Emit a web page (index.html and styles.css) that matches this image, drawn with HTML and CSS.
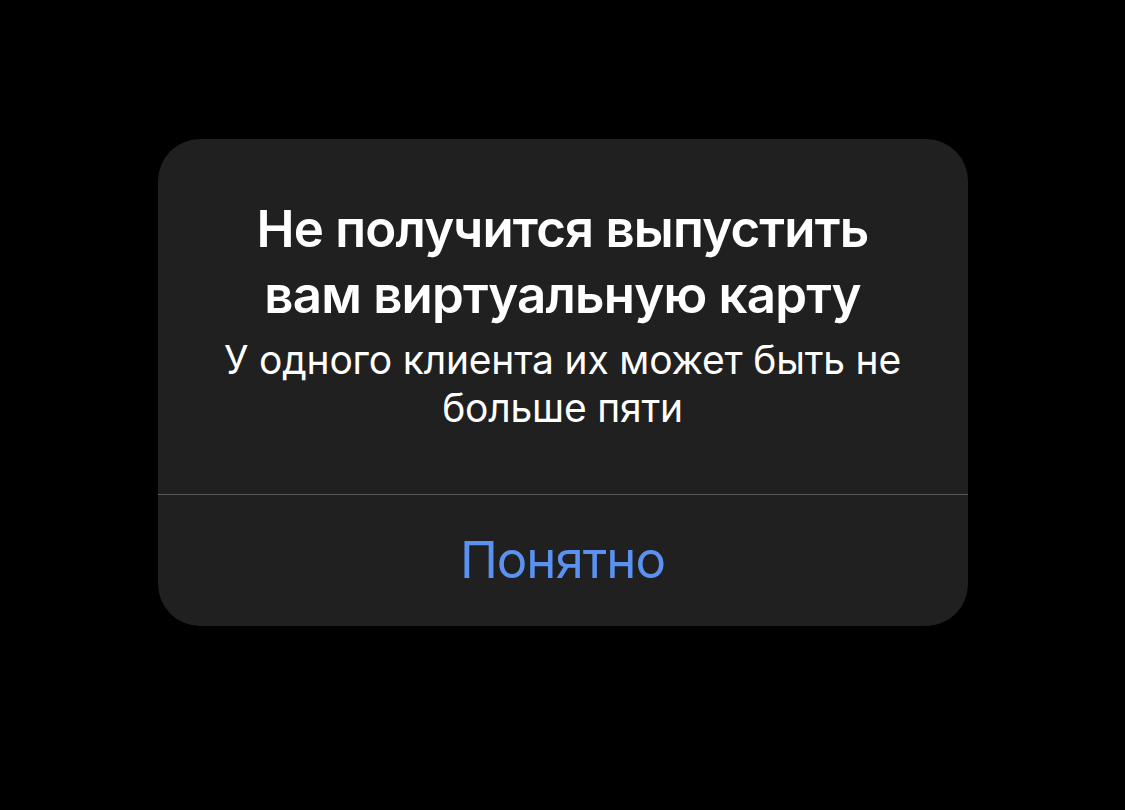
FILE: index.html
```html
<!DOCTYPE html>
<html lang="ru">
<head>
  <meta charset="UTF-8" />
  <meta name="viewport" content="width=device-width, initial-scale=1" />
  <title>Ошибка</title>
  <link rel="stylesheet" href="styles.css">
</head>
<body>
  <div class="alert">
    <div class="alert-body">
      <h2>Не получится выпустить<br>вам виртуальную карту</h2>
      <p>У одного клиента их может быть не<br>больше пяти</p>
    </div>
    <button type="button">Понятно</button>
  </div>
</body>
</html>
```

FILE: styles.css
```css
body {
  font-family: Inter, "Noto Sans", sans-serif;
  background-color: #000;
  margin: 0;
  padding-top: 139px;
}
.alert {
  width: 810px;
  margin: 0 auto;
  background: #202020;
  border-radius: 42px;
  overflow: hidden;
  color: #fff;
  text-align: center;
}
.alert-body {
  padding: 57px 40px 62px;
  border-bottom: 1px solid #58585a;
}
h2 {
  margin: 0;
  font-size: 51px;
  line-height: 66px;
  font-weight: 600;
  letter-spacing: -0.8px;
}
p {
  margin: 8px 0 0;
  font-size: 39px;
  line-height: 48px;
  font-weight: 400;
  letter-spacing: -0.2px;
}
button {
  display: block;
  width: 100%;
  height: 131px;
  padding: 0 0 2px;
  background: none;
  border: none;
  color: #5b91f1;
  font-family: inherit;
  font-size: 51px;
  letter-spacing: -1px;
  cursor: pointer;
}
```
